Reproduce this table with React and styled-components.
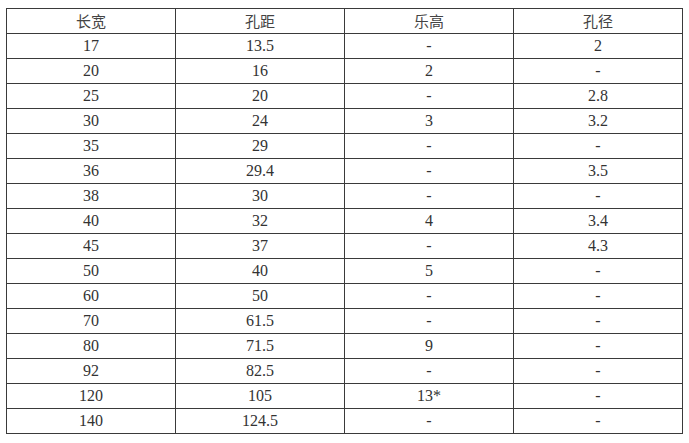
import React from 'react'
import styled, {createGlobalStyle} from 'styled-components'

const GlobalStyle = createGlobalStyle`
  html, body {
    margin: 0;
    padding: 0;
    background: #fff;
  }
`

const Page = styled.div`
  padding: 8px 6px;
`

const Table = styled.table`
  width: 677px;
  border-collapse: collapse;
  table-layout: fixed;
  font-family: "Liberation Serif", "Noto Sans CJK SC", serif;
  font-size: 16px;
  color: #333;
`

const Cell = styled.td`
  border: 1px solid #3a3a3a;
  height: 24px;
  padding: 0;
  text-align: center;
  vertical-align: middle;
  line-height: 24px;
`

const HeadCell = styled(Cell).attrs({as: 'th'})`
  font-weight: normal;
  font-family: "Noto Sans CJK SC", sans-serif;
  font-size: 15px;
  color: #444;
`

const rows = [
    ['17', '13.5', '-', '2'],
    ['20', '16', '2', '-'],
    ['25', '20', '-', '2.8'],
    ['30', '24', '3', '3.2'],
    ['35', '29', '-', '-'],
    ['36', '29.4', '-', '3.5'],
    ['38', '30', '-', '-'],
    ['40', '32', '4', '3.4'],
    ['45', '37', '-', '4.3'],
    ['50', '40', '5', '-'],
    ['60', '50', '-', '-'],
    ['70', '61.5', '-', '-'],
    ['80', '71.5', '9', '-'],
    ['92', '82.5', '-', '-'],
    ['120', '105', '13*', '-'],
    ['140', '124.5', '-', '-']
]

export default function App() {
    return (
        <Page>
            <GlobalStyle/>
            <Table>
                <thead>
                    <tr>
                        <HeadCell>长宽</HeadCell>
                        <HeadCell>孔距</HeadCell>
                        <HeadCell>乐高</HeadCell>
                        <HeadCell>孔径</HeadCell>
                    </tr>
                </thead>
                <tbody>
                    {rows.map(r => (
                        <tr key={r[0]}>
                            {r.map((v, i) => <Cell key={i}>{v}</Cell>)}
                        </tr>
                    ))}
                </tbody>
            </Table>
        </Page>
    )
}
